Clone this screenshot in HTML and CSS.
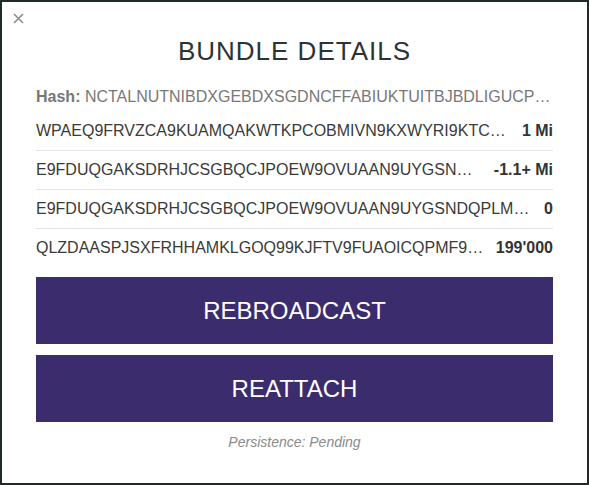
FILE: index.html
```html
<!DOCTYPE html>
<html>
<head>
<meta charset="utf-8">
<link rel="stylesheet" href="styles.css">
</head>
<body>
<div class="modal">
  <button class="close" aria-label="Close">
    <svg width="11" height="11" viewBox="0 0 11 11"><path d="M1 1 L10 10 M10 1 L1 10" stroke="#8c8c8c" stroke-width="1.6" fill="none"/></svg>
  </button>
  <h1 class="title">BUNDLE DETAILS</h1>
  <div class="hash"><strong>Hash:</strong> NCTALNUTNIBDXGEBDXSGDNCFFABIUKTUITBJBDLIGUCPQWERTZKLMNBVCXYASDFGHJKLPOIUZTREWQ99XCVBNM</div>
  <ul class="txs">
    <li class="tx"><span class="addr">WPAEQ9FRVZCA9KUAMQAKWTKPCOBMIVN9KXWYRI9KTCXLAZQVSNPHBXOBDW9AZCMDPQRUU9QHWPQ9EYIYVQNHGPTKIQ9</span><span class="val">1 Mi</span></li>
    <li class="tx"><span class="addr">E9FDUQGAKSDRHJCSGBQCJPOEW9OVUAAN9UYGSNDQPLMUDFKWAYVWESGMZBTQJGZQKBLFNOSPGRQPMNTLQSDOAVNYGA9</span><span class="val">-1.1+ Mi</span></li>
    <li class="tx"><span class="addr">E9FDUQGAKSDRHJCSGBQCJPOEW9OVUAAN9UYGSNDQPLMUDFKWAYVWESGMZBTQJGZQKBLFNOSPGRQPMNTLQSDOAVNYGA9</span><span class="val">0</span></li>
    <li class="tx"><span class="addr">QLZDAASPJSXFRHHAMKLGOQ99KJFTV9FUAOICQPMF9IJNVWEZEHTXMRFNNUKXMGSNBEILFIGHKFBMWZRVKSQBWMVACEYA9</span><span class="val">199'000</span></li>
  </ul>
  <div class="actions">
    <button class="btn">REBROADCAST</button>
    <button class="btn">REATTACH</button>
  </div>
  <p class="status">Persistence: Pending</p>
</div>
</body>
</html>
```

FILE: styles.css
```css
html, body {
  margin: 0;
  padding: 0;
}
body {
  background: #1f2a29;
  padding: 2px;
  width: 585px;
  height: 481px;
  font-family: "Liberation Sans", Arial, sans-serif;
}
.modal {
  position: relative;
  background: #fff;
  height: 481px;
  padding: 30px 34px 0 34px;
  box-sizing: border-box;
}
.close {
  position: absolute;
  left: 9px;
  top: 9px;
  width: 15px;
  height: 15px;
  padding: 2px;
  border: 0;
  background: transparent;
  display: flex;
  align-items: center;
  justify-content: center;
}
.title {
  margin: 0;
  text-align: center;
  font-weight: normal;
  font-size: 26px;
  letter-spacing: 1px;
  line-height: 38px;
  color: #2b3335;
}
.hash {
  margin-top: 12px;
  height: 30px;
  line-height: 30px;
  font-size: 16px;
  color: #787878;
  white-space: nowrap;
  overflow: hidden;
  text-overflow: ellipsis;
}
.hash strong {
  font-weight: bold;
}
.txs {
  list-style: none;
  margin: 0;
  padding: 0;
}
.tx {
  display: flex;
  align-items: center;
  height: 38px;
  font-size: 16px;
  color: #3a3a3a;
  border-bottom: 1px solid #e4e4e4;
}
.tx:last-child {
  border-bottom: 0;
}
.addr {
  flex: 1;
  min-width: 0;
  white-space: nowrap;
  overflow: hidden;
  text-overflow: ellipsis;
}
.val {
  flex: none;
  padding-left: 12px;
  font-weight: bold;
  color: #333;
}
.actions {
  margin-top: 10px;
  display: flex;
  flex-direction: column;
  gap: 11px;
}
.btn {
  height: 67px;
  border: 0;
  background: #3b2c6e;
  color: #fff;
  font-family: "Liberation Sans", Arial, sans-serif;
  font-size: 24px;
  padding: 0;
}
.status {
  margin: 12px 0 0;
  text-align: center;
  font-style: italic;
  font-size: 14px;
  line-height: 16px;
  color: #8a8a8a;
}
```
